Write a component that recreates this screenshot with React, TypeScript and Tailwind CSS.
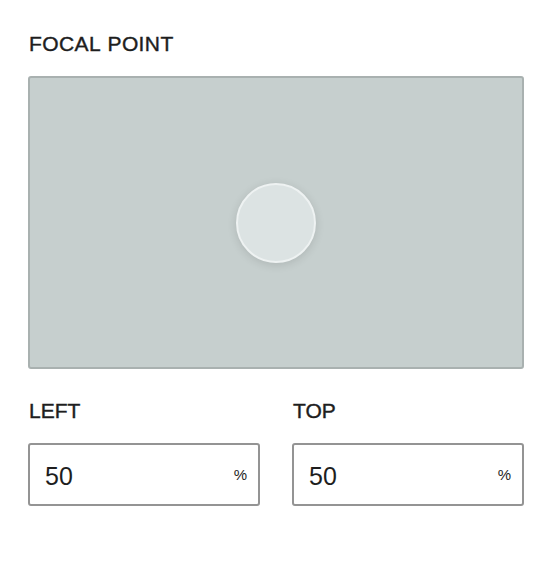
export default function App() {
  return (
    <div className="min-h-screen bg-white px-7 pt-8 text-[#1e1e1e]" style={{ fontFamily: "'Liberation Sans', Arial, sans-serif" }}>
      <div className="text-[21px] leading-6 mb-5 pl-[1px] tracking-[0.4px] [word-spacing:1px] [-webkit-text-stroke:0.4px_#1e1e1e]">FOCAL POINT</div>
      <div className="w-[496px] h-[293px] rounded-[3px] border-2 border-[#a9b1b0] bg-[#c6cfce] flex items-center justify-center">
        <div className="w-20 h-20 rounded-full border-2 border-[#eef2f2] bg-[#dce3e3] shadow-[0_2px_10px_rgba(0,0,0,0.12)]"></div>
      </div>
      <div className="mt-[30px] grid grid-cols-2 gap-8 w-[496px]">
        {["LEFT", "TOP"].map((label) => (
          <div key={label}>
            <div className="text-[21px] leading-6 mb-5 pl-[1px] [-webkit-text-stroke:0.4px_#1e1e1e]">{label}</div>
            <div className="h-[63px] rounded-[3px] border-2 border-[#949494] flex items-center justify-between pl-[15px] pr-[11px]">
              <span className="text-[25px] leading-none mt-[3px]">50</span>
              <span className="text-[15px] leading-none">%</span>
            </div>
          </div>
        ))}
      </div>
    </div>
  )
}
